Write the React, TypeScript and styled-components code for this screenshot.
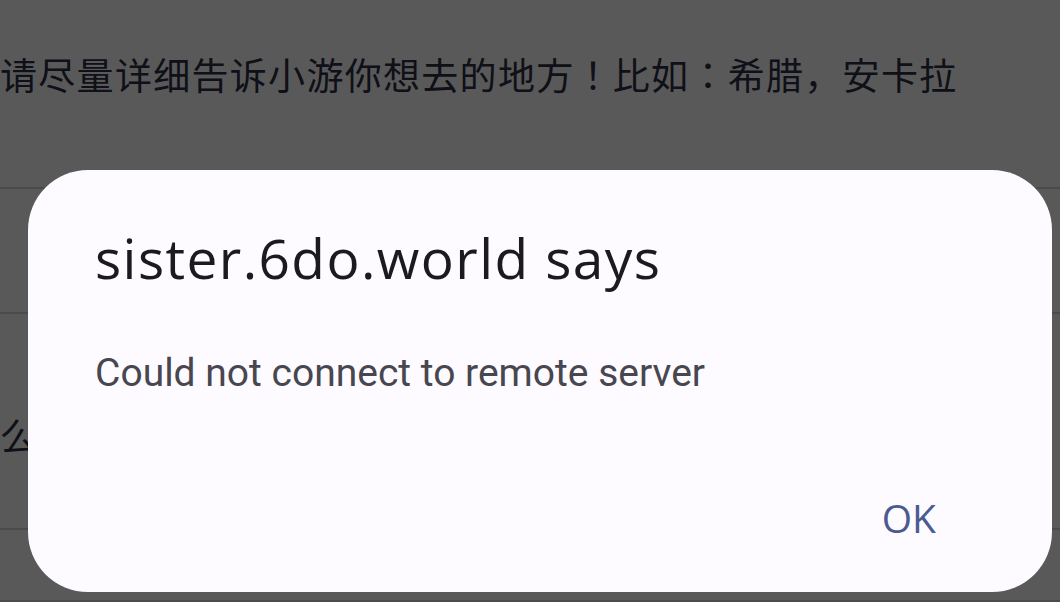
import React from "react";
import styled, { createGlobalStyle } from "styled-components";

const Global = createGlobalStyle`
  html, body { margin: 0; padding: 0; }
  body {
    width: 1060px;
    height: 602px;
    overflow: hidden;
    background: #ffffff;
    font-family: "Noto Sans CJK JP", "Noto Sans", sans-serif;
  }
`;

const Page = styled.div`
  position: relative;
  width: 1060px;
  height: 602px;
  overflow: hidden;
  background: #ffffff;
  display: flex;
  flex-direction: column;
`;

const Header = styled.div`
  height: 189px;
  display: flex;
  align-items: flex-start;
  padding-top: 47px;
  box-sizing: border-box;
  border-bottom: 2px solid #d6d6d6;
`;

const Prompt = styled.p`
  margin: 0;
  font-family: "Noto Sans CJK JP", "Noto Sans CJK SC", sans-serif;
  font-size: 37px;
  line-height: 54px;
  color: #2c2f45;
  white-space: nowrap;
  letter-spacing: 1.3px;
  text-spacing-trim: space-all;
`;

const Row = styled.div<{ $h: number }>`
  height: ${(p) => p.$h}px;
  box-sizing: border-box;
  border-bottom: 2px solid #d6d6d6;
  display: flex;
  align-items: center;
`;

const RowText = styled.span`
  font-family: "Noto Sans CJK JP", "Noto Sans CJK SC", sans-serif;
  font-size: 37px;
  color: #2c2f45;
  padding-top: 28px;
`;

const Scrim = styled.div`
  position: absolute;
  inset: 0;
  background: rgba(0, 0, 0, 0.65);
`;

const Dialog = styled.div`
  position: absolute;
  left: 28px;
  top: 170px;
  width: 1024px;
  height: 422px;
  box-sizing: border-box;
  border-radius: 60px;
  background: #fdfbff;
  padding: 50px 116px 0 67px;
  display: flex;
  flex-direction: column;
`;

const Title = styled.h2`
  margin: 0;
  font-family: "Open Sans", "Roboto", sans-serif;
  font-weight: 400;
  font-size: 55px;
  line-height: 76px;
  color: #1b1b1f;
  letter-spacing: 1.4px;
`;

const Message = styled.p`
  margin: 52px 0 0 0;
  font-family: "Roboto", sans-serif;
  font-size: 39px;
  line-height: 50px;
  color: #48464f;
`;

const Actions = styled.div`
  margin-top: auto;
  display: flex;
  justify-content: flex-end;
  padding-bottom: 49px;
`;

const Button = styled.button`
  border: none;
  background: none;
  padding: 0;
  font-family: "Open Sans", "Roboto", sans-serif;
  font-weight: 500;
  font-size: 39px;
  line-height: 50px;
  color: #4a5b92;
  cursor: pointer;
`;

export default function App() {
  return (
    <>
      <Global />
      <Page>
        <Header>
          <Prompt>请尽量详细告诉小游你想去的地方！比如：希腊，安卡拉</Prompt>
        </Header>
        <Row $h={125} />
        <Row $h={216}>
          <RowText>么</RowText>
        </Row>
        <Row $h={72} />
        <Scrim />
        <Dialog role="alertdialog">
          <Title>sister.6do.world says</Title>
          <Message>Could not connect to remote server</Message>
          <Actions>
            <Button>OK</Button>
          </Actions>
        </Dialog>
      </Page>
    </>
  );
}
